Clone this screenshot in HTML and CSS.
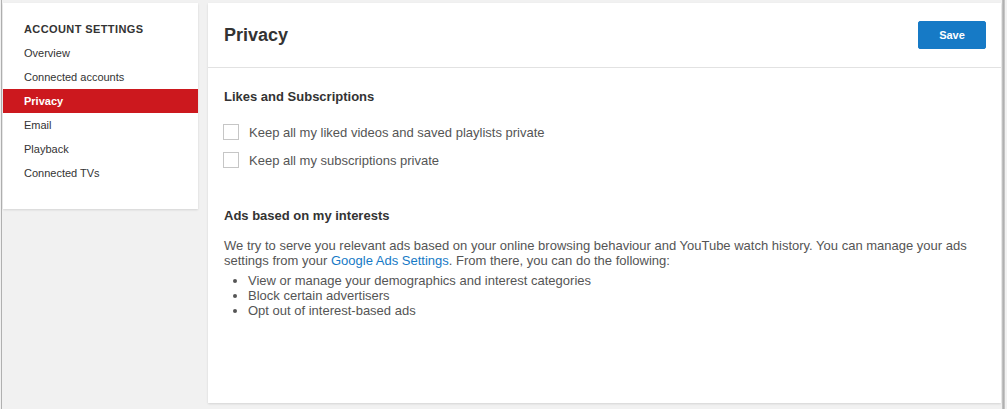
FILE: index.html
```html
<!DOCTYPE html>
<html>
<head>
<meta charset="utf-8">
<link rel="stylesheet" href="styles.css">
</head>
<body>
<div class="frame">
  <div class="layout">
    <nav class="sidebar">
      <h3 class="side-title">ACCOUNT SETTINGS</h3>
      <ul class="side-list">
        <li class="side-item">Overview</li>
        <li class="side-item">Connected accounts</li>
        <li class="side-item active">Privacy</li>
        <li class="side-item">Email</li>
        <li class="side-item">Playback</li>
        <li class="side-item">Connected TVs</li>
      </ul>
    </nav>
    <main class="content">
      <header class="content-head">
        <h1 class="page-title">Privacy</h1>
        <button class="save-btn">Save</button>
      </header>
      <section class="section">
        <h2 class="sec-title">Likes and Subscriptions</h2>
        <label class="check-row"><span class="box"></span>Keep all my liked videos and saved playlists private</label>
        <label class="check-row"><span class="box"></span>Keep all my subscriptions private</label>
      </section>
      <section class="section ads">
        <h2 class="sec-title">Ads based on my interests</h2>
        <p class="para">We try to serve you relevant ads based on your online browsing behaviour and YouTube watch history. You can manage your ads settings from your <a class="link">Google Ads Settings</a>. From there, you can do the following:</p>
        <ul class="bullets">
          <li>View or manage your demographics and interest categories</li>
          <li>Block certain advertisers</li>
          <li>Opt out of interest-based ads</li>
        </ul>
      </section>
    </main>
  </div>
  <div class="edge"></div>
</div>
</body>
</html>
```
FILE: styles.css
```css
html, body {
  margin: 0;
  padding: 0;
}
body {
  background: #f1f1f1;
  font-family: "Liberation Sans", Arial, sans-serif;
  width: 1007px;
  height: 409px;
  overflow: hidden;
}
.frame {
  display: flex;
  height: 409px;
  border-left: 1px solid #b0b0b0;
  margin-left: 1px;
  box-sizing: border-box;
}
.layout {
  display: flex;
  align-items: flex-start;
  gap: 10px;
  padding: 3px 0 0 1px;
  flex: 0 0 auto;
}
.sidebar {
  flex: 0 0 195px;
  width: 195px;
  height: 206px;
  background: #fff;
  box-shadow: 0 1px 2px rgba(0,0,0,0.12);
  box-sizing: border-box;
  padding-top: 20px;
}
.side-title {
  margin: 0 0 0 21px;
  font-size: 11px;
  font-weight: bold;
  color: #333;
  letter-spacing: 0.4px;
  line-height: 13px;
}
.side-list {
  list-style: none;
  margin: 5px 0 0;
  padding: 0;
}
.side-item {
  height: 24px;
  line-height: 24px;
  font-size: 11px;
  color: #333;
  padding-left: 21px;
}
.side-item.active {
  background: #cc181e;
  color: #fff;
  font-weight: bold;
}
.content {
  flex: 0 0 793px;
  width: 793px;
  height: 400px;
  background: #fff;
  box-shadow: 0 1px 2px rgba(0,0,0,0.12);
}
.content-head {
  display: flex;
  align-items: center;
  justify-content: space-between;
  height: 64px;
  border-bottom: 1px solid #e2e2e2;
  padding: 0 15px 0 16px;
}
.page-title {
  margin: 0;
  font-size: 18px;
  font-weight: bold;
  color: #333;
}
.save-btn {
  width: 68px;
  height: 28px;
  background: #167ac6;
  border: 1px solid #167ac6;
  border-radius: 2px;
  color: #fff;
  font-family: "Liberation Sans", Arial, sans-serif;
  font-size: 11px;
  font-weight: bold;
  padding: 0;
  margin-top: -1px;
}
.section {
  padding: 0 16px;
}
.sec-title {
  margin: 0;
  font-size: 13px;
  font-weight: bold;
  color: #333;
  line-height: 15px;
  padding-top: 21px;
  padding-bottom: 20px;
}
.check-row {
  display: flex;
  align-items: center;
  height: 16px;
  margin-bottom: 12px;
  font-size: 13px;
  color: #555;
}
.box {
  width: 14px;
  height: 14px;
  border: 1px solid #c6c6c6;
  margin: 0 10px 0 -1px;
  flex: 0 0 auto;
}
.ads .sec-title {
  padding-top: 28px;
  padding-bottom: 15px;
}
.para {
  margin: 0;
  font-size: 13px;
  line-height: 15px;
  color: #555;
}
.link {
  color: #167ac6;
  text-decoration: none;
}
.bullets {
  margin: 5px 0 0;
  padding-left: 24px;
  font-size: 13px;
  line-height: 15px;
  color: #555;
}
.edge {
  margin-left: 1px;
  width: 3px;
  height: 409px;
  background: linear-gradient(to right, #c8c8c8, #a8a8a8 66%, #e0e0e0);
}
```
